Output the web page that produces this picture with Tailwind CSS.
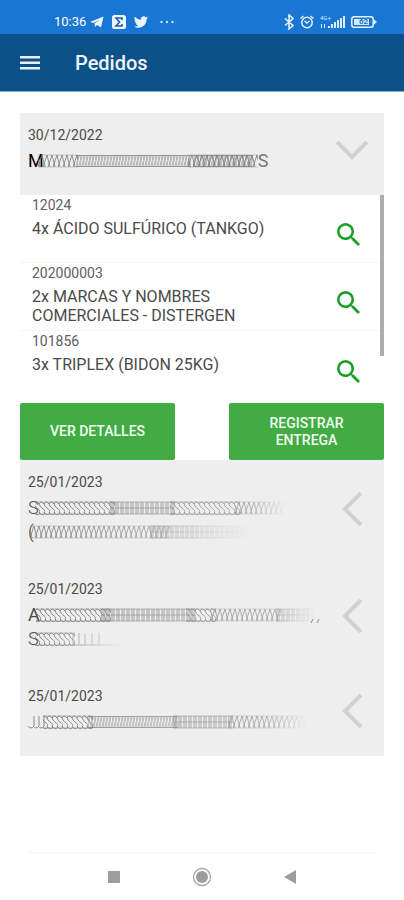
<!DOCTYPE html>
<html lang="es">
<head>
<meta charset="utf-8">
<meta name="viewport" content="width=device-width, initial-scale=1">
<title>Pedidos</title>
<script src="https://cdn.jsdelivr.net/npm/@tailwindcss/browser@4"></script>
</head>
<body class="flex min-h-screen flex-col bg-white font-[Roboto,sans-serif] text-[#4a4a4a]">

<!-- Shared symbols and strokes for the concealed customer names -->
<svg class="absolute size-0" aria-hidden="true">
  <defs>
    <symbol id="search" viewBox="3 3 17.5 17.5"><path fill="#1a9f25" d="M15.5 14h-.79l-.28-.27A6.47 6.47 0 0 0 16 9.5 6.5 6.5 0 1 0 9.5 16c1.61 0 3.09-.59 4.23-1.57l.27.28v.79l5 4.99L20.49 19l-4.99-5zm-6 0C7.01 14 5 11.99 5 9.5S7.01 5 9.5 5 14 7.01 14 9.5 11.99 14 9.5 14z"/></symbol>
    <symbol id="left" viewBox="0 0 32 36"><path fill="none" stroke="#d1d1d1" stroke-width="4" d="M25 2 9 18l16 16"/></symbol>
    <pattern id="curves" width="5" height="24" patternUnits="userSpaceOnUse">
      <path fill="none" stroke="#777" stroke-width=".9" d="M4 8C1 4-2 7 0 10s5 3 5 6-4 4-6 0M9 8C6 4 3 7 5 10s5 3 5 6-4 4-6 0"/>
      <path stroke="#777" stroke-opacity=".5" d="M0 6h5M0 18h5"/>
    </pattern>
    <pattern id="bars" width="5" height="24" patternUnits="userSpaceOnUse">
      <path fill="none" stroke="#777" stroke-width=".8" d="M1 6v12M3 6v12"/>
      <path stroke="#777" stroke-opacity=".6" d="M0 6h5M0 12h5M0 18h5"/>
    </pattern>
    <pattern id="slants" width="5" height="24" patternUnits="userSpaceOnUse">
      <path fill="none" stroke="#777" stroke-width=".8" d="M0 18 4 6l3 12M-5 18-1 6l3 12"/>
      <path stroke="#777" stroke-opacity=".35" d="M0 6h5M0 18h5"/>
    </pattern>
    <pattern id="fine" width="3" height="24" patternUnits="userSpaceOnUse">
      <path fill="none" stroke="#777" stroke-width=".7" stroke-opacity=".7" d="M0 17 2 7M2 17l1-5M0 12l1-5"/>
      <path stroke="#777" stroke-opacity=".75" d="M0 6.500h3M0 17.500h3"/>
    </pattern>
    <linearGradient id="fade"><stop offset="0" stop-color="#fff"/><stop offset=".5" stop-color="#fff" stop-opacity=".8"/><stop offset=".85" stop-color="#fff" stop-opacity=".65"/><stop offset="1" stop-color="#fff" stop-opacity="0"/></linearGradient>
    <linearGradient id="fadeLong"><stop offset="0" stop-color="#fff"/><stop offset=".5" stop-color="#fff" stop-opacity=".7"/><stop offset="1" stop-color="#fff" stop-opacity="0"/></linearGradient>
    <mask id="soft" maskContentUnits="objectBoundingBox"><rect width="1" height="1" fill="url(#fade)"/></mask>
    <mask id="softLong" maskContentUnits="objectBoundingBox"><rect width="1" height="1" fill="url(#fadeLong)"/></mask>
  </defs>
</svg>

<div class="flex h-[34px] items-end justify-between bg-[#1976d2] pb-1 pl-[54px] pr-[27px] text-white">
  <div class="flex items-center gap-1">
    <span class="text-[13px] leading-4">10:36</span>
    <svg class="h-3 w-3.5" viewBox="0 0 14 12" fill="#eef5ff"><path d="M0 6 13.500.500 11 11.500 7 9l-2 2-.5-3.500L10 3.500 3.500 7z"/></svg>
    <svg class="ml-1 size-3.5" viewBox="0 0 14 14"><rect width="14" height="14" rx="2.500" fill="#eef5ff"/><path fill="none" stroke="#1d5fa8" stroke-width="1.600" d="M10 5V3H4l3.500 4L4 11h6V9"/></svg>
    <svg class="ml-1 h-3 w-3.5" viewBox="0 2 24 20" fill="#eef5ff"><path d="M23.900 4.600a10 10 0 0 1-2.800.8 5 5 0 0 0 2.100-2.700 10 10 0 0 1-3.100 1.200 4.900 4.900 0 0 0-8.400 4.500A14 14 0 0 1 1.600 3.200a4.900 4.900 0 0 0 1.500 6.500 5 5 0 0 1-2.200-.6 4.900 4.900 0 0 0 3.900 4.900 5 5 0 0 1-2.200.1 4.900 4.900 0 0 0 4.600 3.400A9.900 9.900 0 0 1 0 19.500 14 14 0 0 0 21.500 7.100a10 10 0 0 0 2.400-2.500z"/></svg>
    <svg class="ml-2 h-3 w-3.5" viewBox="0 0 14 12" fill="#c9e2fb"><circle cx="1.500" cy="6" r="1.200"/><circle cx="7" cy="6" r="1.200"/><circle cx="12.500" cy="6" r="1.200"/></svg>
  </div>
  <div class="flex items-center">
    <svg class="mr-1.5 h-4 w-2.5" viewBox="0 0 10 16" fill="none" stroke="#e5f1ff" stroke-width="1.600"><path d="m1 4.500 8 7-4 3.500V1l4 3.500-8 7"/></svg>
    <svg class="mr-1.5 h-3.5 w-3.5" viewBox="0 0 14 14" fill="none" stroke="#e5f1ff" stroke-width="1.500"><circle cx="7" cy="7.500" r="5.200"/><path d="M.5 3.500 3.500 1M13.500 3.500 10.500 1M4.500 6 7 8l2.500-2"/></svg>
    <span class="relative block h-4 w-[25px]">
      <span class="absolute left-0 top-0 text-[6px] leading-[7px] text-[#d6e8fc]">4G+</span>
      <svg class="h-4 w-[25px]" viewBox="0 0 25 16" fill="#dcecff"><path d="M1 10h1v4H1zM4 10h1v4H4zM8 12h2v2H8zM11 10h2v4h-2zM14 8h2v6h-2zM17 6h2v8h-2zM20 4h2v10h-2zM23 2h2v12h-2z"/></svg>
    </span>
    <span class="relative ml-1.5 block h-3 w-[26px]">
      <svg class="h-3 w-[26px]" viewBox="0 0 26 12"><rect x=".8" y=".8" width="21.400" height="10.400" rx="2.500" fill="none" stroke="#e5f1ff" stroke-width="1.500"/><rect x="3" y="3" width="15" height="6" fill="#d6e8fc"/><path d="M23 3.500 26 6l-3 2.500z" fill="#e5f1ff"/></svg>
      <span class="absolute left-2 top-0 text-[8px] font-bold leading-3 text-[#1976d2]">62</span>
    </span>
  </div>
</div>

<header class="flex h-[58px] items-center gap-[35px] border-b border-[#7fb0d4] bg-[#0b5187] pl-5">
  <button type="button" aria-label="Abrir menú" class="flex h-10 w-5 items-center">
    <svg class="h-4 w-5" viewBox="0 0 20 16" fill="#e9eefa"><path d="M0 1h20v2.500H0zM0 6.500h20V9H0zM0 12h20v2.500H0z"/></svg>
  </button>
  <h1 class="text-xl font-medium leading-6 text-[#eef4fb]">Pedidos</h1>
</header>

<main class="flex-1 px-5 pt-[21px]">
  <section class="flex items-center justify-between bg-[#eeeeee] pb-[22px] pl-2 pr-4 pt-[14px]">
    <div>
      <time class="block text-sm leading-4">30/12/2022</time>
      <p class="mt-1.5 flex text-lg leading-6"><span class="text-black">M</span>
        <svg class="-ml-1.5 h-6 w-[220px]" viewBox="0 0 220 24" aria-hidden="true"><rect width="40" height="24" fill="url(#slants)"/><rect x="38" width="115" height="24" fill="url(#fine)"/><rect x="150" width="70" height="24" fill="url(#slants)"/><rect x="155" width="60" height="24" fill="url(#fine)"/></svg><span class="text-[#777777]">S</span></p>
    </div>
    <button type="button" aria-label="Contraer pedido" class="shrink-0"><svg class="h-9 w-8" viewBox="0 0 32 36"><path fill="none" stroke="#d1d1d1" stroke-width="4" d="m1 10 15 15 15-15"/></svg></button>
  </section>

  <div class="relative">
    <ul class="pb-1 pr-1">
      <li class="flex min-h-[68px] items-center border-b border-[#f6f6f6] pl-3 pr-5">
        <div class="flex-1 self-start pt-0.5">
          <span class="block text-sm leading-4 text-[#606060]">12024</span>
          <p class="mt-1.5 leading-[19px]">4x ÁCIDO SULFÚRICO (TANKGO)</p>
        </div>
        <button type="button" aria-label="Ver producto 12024" class="mt-3 shrink-0"><svg class="size-[23px]"><use href="#search"/></svg></button>
      </li>
      <li class="flex min-h-[68px] items-center border-b border-[#f6f6f6] pl-3 pr-5">
        <div class="flex-1 self-start pt-0.5">
          <span class="block text-sm leading-4 text-[#606060]">202000003</span>
          <p class="mt-1.5 leading-[19px]">2x MARCAS Y NOMBRES<br>COMERCIALES - DISTERGEN</p>
        </div>
        <button type="button" aria-label="Ver producto 202000003" class="mt-3 shrink-0"><svg class="size-[23px]"><use href="#search"/></svg></button>
      </li>
      <li class="flex min-h-[68px] items-center pl-3 pr-5">
        <div class="flex-1 self-start pt-0.5">
          <span class="block text-sm leading-4 text-[#606060]">101856</span>
          <p class="mt-1.5 leading-[19px]">3x TRIPLEX (BIDON 25KG)</p>
        </div>
        <button type="button" aria-label="Ver producto 101856" class="mt-3 shrink-0"><svg class="size-[23px]"><use href="#search"/></svg></button>
      </li>
    </ul>
    <div class="absolute right-0 top-0 h-[161px] w-1 bg-[#adadad]"></div>
  </div>

  <div class="grid grid-cols-2 gap-[54px]">
    <button type="button" class="h-[57px] rounded-xs bg-[#43ab43] px-6 text-sm font-medium leading-[17px] text-[#f1fbf1]">VER DETALLES</button>
    <button type="button" class="h-[57px] rounded-xs bg-[#43ab43] px-6 text-sm font-medium leading-[17px] text-[#f1fbf1]">REGISTRAR ENTREGA</button>
  </div>

  <section class="flex items-center justify-between bg-[#eeeeee] pb-[22px] pl-2 pr-4 pt-[14px]">
    <div>
      <time class="block text-sm leading-4">25/01/2023</time>
      <p class="mt-1.5 flex text-lg font-light leading-6"><span>S</span>
        <svg class="-ml-1 h-6 w-[252px]" viewBox="0 0 252 24" aria-hidden="true"><g mask="url(#soft)"><rect width="80" height="24" fill="url(#curves)"/><rect x="75" width="65" height="24" fill="url(#bars)"/><rect x="135" width="70" height="24" fill="url(#curves)"/><rect x="200" width="52" height="24" fill="url(#slants)"/></g></svg></p>
      <p class="flex text-lg font-light leading-6"><span>(</span>
        <svg class="-ml-1 h-6 w-[222px]" viewBox="0 0 222 24" aria-hidden="true"><g mask="url(#softLong)"><rect width="140" height="24" fill="url(#slants)"/><rect x="120" width="102" height="24" fill="url(#bars)"/></g></svg></p>
    </div>
    <button type="button" aria-label="Expandir pedido" class="shrink-0"><svg class="h-9 w-8"><use href="#left"/></svg></button>
  </section>

  <section class="flex items-center justify-between border-t border-[#ebebeb] bg-[#eeeeee] pb-[22px] pl-2 pr-4 pt-[14px]">
    <div>
      <time class="block text-sm leading-4">25/01/2023</time>
      <p class="mt-1.5 flex text-lg leading-6"><span>A</span>
        <svg class="-ml-1 h-6 w-[284px]" viewBox="0 0 284 24" aria-hidden="true"><g mask="url(#soft)"><rect width="75" height="24" fill="url(#curves)"/><rect x="65" width="95" height="24" fill="url(#bars)"/><rect x="150" width="30" height="24" fill="url(#curves)"/><rect x="175" width="70" height="24" fill="url(#slants)"/><rect x="240" width="40" height="24" fill="url(#bars)"/></g><path stroke="#888" d="m275 20 2-4m4 4 2-4"/></svg></p>
      <p class="flex text-lg font-light leading-6"><span>S</span>
        <svg class="-ml-1 h-6 w-[90px]" viewBox="0 0 90 24" aria-hidden="true"><g mask="url(#softLong)"><rect width="40" height="24" fill="url(#curves)"/><path fill="none" stroke="#888" stroke-width=".8" d="M38 6v12M44 6v12M50 6v12M57 6v12M64 6v12M38 18h52"/></g></svg></p>
    </div>
    <button type="button" aria-label="Expandir pedido" class="shrink-0"><svg class="h-9 w-8"><use href="#left"/></svg></button>
  </section>

  <section class="flex items-center justify-between border-t border-[#ebebeb] bg-[#eeeeee] pb-[22px] pl-2 pr-4 pt-[14px]">
    <div>
      <time class="block text-sm leading-4">25/01/2023</time>
      <p class="mt-1.5 flex leading-6">
        <svg class="h-6 w-[284px]" viewBox="0 0 284 24" aria-hidden="true"><g mask="url(#soft)"><path fill="none" stroke="#888" d="M0 16q3 4 6 0V6M5 16q3 4 6 0V6M10 16q3 4 6 0V6"/><rect x="15" width="50" height="24" fill="url(#curves)"/><rect x="60" width="90" height="24" fill="url(#fine)"/><rect x="145" width="60" height="24" fill="url(#bars)"/><rect x="200" width="80" height="24" fill="url(#slants)"/></g></svg></p>
    </div>
    <button type="button" aria-label="Expandir pedido" class="shrink-0"><svg class="h-9 w-8"><use href="#left"/></svg></button>
  </section>
</main>

<nav aria-label="Navegación del sistema" class="mx-7 flex h-12 items-center justify-between border-t border-[#f5f5f5] px-[79px]">
  <button type="button" aria-label="Recientes"><svg class="size-3.5" viewBox="0 0 14 14"><path fill="#9d9d9d" d="M1 1h12v12H1z"/></svg></button>
  <button type="button" aria-label="Inicio"><svg class="size-5" viewBox="0 0 20 20"><circle cx="10" cy="10" r="8.500" fill="none" stroke="#a5a5a5" stroke-width="1.300"/><circle cx="10" cy="10" r="6" fill="#9d9d9d"/></svg></button>
  <button type="button" aria-label="Atrás"><svg class="size-3.5" viewBox="0 0 14 14"><path fill="#9d9d9d" d="M1 7 13 0v14z"/></svg></button>
</nav>
</body>
</html>
